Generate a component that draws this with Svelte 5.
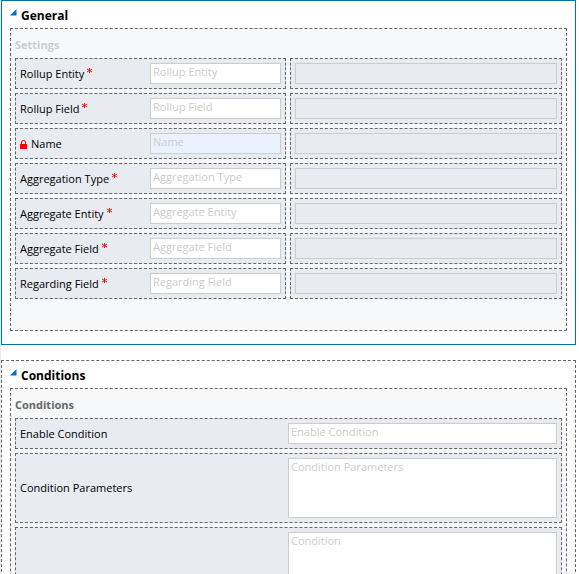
<script>
  const fields = [
    { id: 'rollup-entity', label: 'Rollup Entity', required: true },
    { id: 'rollup-field', label: 'Rollup Field', required: true },
    { id: 'name', label: 'Name', locked: true },
    { id: 'aggregation-type', label: 'Aggregation Type', required: true },
    { id: 'aggregate-entity', label: 'Aggregate Entity', required: true },
    { id: 'aggregate-field', label: 'Aggregate Field', required: true },
    { id: 'regarding-field', label: 'Regarding Field', required: true }
  ];
  const conditions = [
    { id: 'enable-condition', label: 'Enable Condition' },
    { id: 'condition-parameters', label: 'Condition Parameters', multiline: true },
    { id: 'condition', label: 'Condition', multiline: true, large: true }
  ];
</script>

{#snippet heading(text)}
  <h2>
    <svg width="7" height="7" viewBox="0 0 7 7" aria-hidden="true"><path d="M6.5 0V6.5H0Z" fill="#0072c6" /></svg>
    {text}
  </h2>
{/snippet}

<main>
  <section class="tab selected">
    {@render heading('General')}
    <div class="panel tall">
      <h3 class="muted">Settings</h3>
      <div class="rows">
        {#each fields as field}
          <div class="pair">
            <div class="cell">
              <label for={field.id}>
                {#if field.locked}
                  <svg class="lock" width="7" height="9" viewBox="0 0 7 9" aria-hidden="true">
                    <path d="M1.5 4V2Q1.5 .5 3.5 .5T5.5 2V4" fill="none" stroke="#f00" />
                    <path d="M0 4H7V9H0Z" fill="#f00" />
                  </svg>
                {/if}
                <span>{field.label}</span>
                {#if field.required}
                  <svg class="star" width="5" height="5" viewBox="0 0 5 5" aria-hidden="true">
                    <path d="M2.5 0V5M0 1L5 4M5 1L0 4" fill="none" stroke="#f00" stroke-width=".9" />
                  </svg>
                {/if}
              </label>
              <input id={field.id} type="text" placeholder={field.label} class:locked={field.locked} readonly={field.locked} />
            </div>
            <div class="cell spacer"><input type="text" aria-label="Spacer" disabled /></div>
          </div>
        {/each}
      </div>
    </div>
  </section>

  <section class="tab">
    {@render heading('Conditions')}
    <div class="panel">
      <h3>Conditions</h3>
      <div class="rows">
        {#each conditions as field}
          <div class="cell wide" class:multiline={field.multiline} class:large={field.large}>
            <label for={field.id}><span>{field.label}</span></label>
            {#if field.multiline}
              <textarea id={field.id} placeholder={field.label}></textarea>
            {:else}
              <input id={field.id} type="text" placeholder={field.label} />
            {/if}
          </div>
        {/each}
      </div>
    </div>
  </section>
</main>

<style>
  :global(body) {
    background: #fff;
  }

  main {
    box-sizing: border-box;
    height: 100vh;
    overflow: hidden;
    border-left: 1px solid #eaeaea;
    padding-right: 3px;
    font: 11px/16px 'Open Sans', 'Noto Sans', sans-serif;
    color: #000;
  }

  .tab {
    border: 1px dashed #666;
    padding: 0 8px 13px;
    margin-bottom: 15px;
  }

  .tab.selected {
    border: 1px solid #00739c;
  }

  h2 {
    display: flex;
    gap: 4px;
    margin: 0;
    padding-top: 6px;
    height: 21px;
    font: bold 12px/18px 'Open Sans', 'Noto Sans', sans-serif;
  }

  h2 svg {
    margin-top: 2px;
  }

  .panel {
    border: 1px dashed #666;
    padding: 0 4px 4px;
    background: #f7f8fa;
  }

  .panel.tall {
    padding-bottom: 31px;
  }

  h3 {
    margin: 0;
    padding: 8px 0 5px;
    font: bold 11px/16px 'Open Sans', 'Noto Sans', sans-serif;
    color: #666;
  }

  h3.muted {
    color: #ccc;
  }

  .rows {
    display: grid;
    gap: 4px;
  }

  .pair {
    display: grid;
    grid-template-columns: calc(50% - 3px) 1fr;
    gap: 4px;
  }

  .cell {
    box-sizing: border-box;
    display: grid;
    grid-template-columns: 130px 1fr;
    align-items: center;
    border: 1px dashed #666;
    padding: 4px;
    background: #e8ebf0;
  }

  .cell.spacer {
    grid-template-columns: 1fr;
  }

  .cell.wide {
    grid-template-columns: 268px 1fr;
  }

  .cell.large textarea {
    height: 240px;
  }

  label {
    display: flex;
    align-items: center;
    padding-top: 1px;
  }

  .multiline label {
    padding-top: 0;
  }

  .lock {
    margin-right: 4px;
  }

  .star {
    align-self: flex-start;
    margin: 2px 0 0 3px;
  }

  input,
  textarea {
    box-sizing: border-box;
    display: block;
    width: 100%;
    min-width: 0;
    height: 21px;
    margin: 0;
    border: 1px solid #ccc;
    border-radius: 0;
    padding: 0 2px 4px;
    background: #fff;
    font: inherit;
    outline: none;
  }

  textarea {
    height: 60px;
    resize: none;
  }

  input::placeholder,
  textarea::placeholder {
    color: #ccc;
    opacity: 1;
  }

  input.locked {
    background: #eaf1ff;
  }

  input:disabled {
    background: #e8ebf0;
  }
</style>
